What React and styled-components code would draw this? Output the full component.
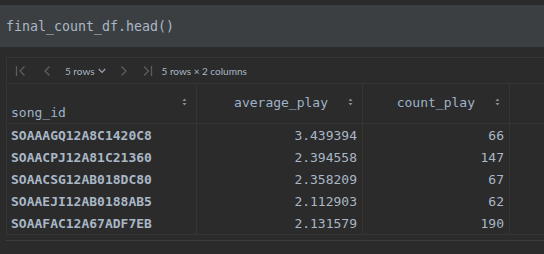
import React from "react";
import styled, { createGlobalStyle } from "styled-components";

const Global = createGlobalStyle`
  html, body { margin: 0; padding: 0; background: #2b2b2b; }
  body { width: 544px; height: 254px; overflow: hidden; }
`;

const Page = styled.div`
  padding-top: 5px;
  font-family: "DejaVu Sans Mono", "Liberation Mono", monospace;
`;

const CodeCell = styled.div`
  height: 42px;
  background: #3c3f41;
  padding-left: 6px;
  padding-top: 1px;
  box-sizing: border-box;
  display: flex;
  align-items: center;
  font-size: 13.3px;
  color: #a9b7c6;
`;

const Output = styled.div`
  margin-top: 10px;
  margin-left: 6px;
`;

const Toolbar = styled.div`
  height: 25px;
  border-top: 1px solid #353535;
  border-bottom: 1px solid #353535;
  border-left: 1px solid #353535;
  display: flex;
  align-items: center;
  font-family: Lato, "Noto Sans", sans-serif;
  font-size: 10px;
  color: #a9b7c6;
`;

const IconBtn = styled.span`
  display: inline-flex;
  align-items: center;
  margin-left: ${(p) => p.$ml}px;
  color: ${(p) => (p.$active ? "#a9b7c6" : "#5a5d61")};
`;

const Label = styled.span`
  margin-left: ${(p) => p.$ml}px;
  color: ${(p) => p.$color || "#a9b7c6"};
  white-space: nowrap;
`;

const Grid = styled.div`
  display: grid;
  grid-template-columns: 190px 166px 147px 1fr;
  border-left: 1px solid #353535;
  border-bottom: 1px solid #353535;
  margin-bottom: 5px;
`;

const HeadCell = styled.div`
  height: 39px;
  border-bottom: 1px solid #353535;
  border-right: ${(p) => (p.$last ? "none" : "1px solid #353535")};
  display: flex;
  align-items: center;
  justify-content: ${(p) => (p.$index ? "space-between" : "flex-end")};
  padding: 0 9px 0 4px;
  color: #9fb3c8;
  font-size: 13px;
`;

const IndexName = styled.span`
  align-self: flex-end;
  margin-bottom: 3px;
`;

const HeadName = styled.span`
  margin-right: 20px;
  margin-bottom: 3px;
`;

const SortIcon = styled.svg`
  width: 5px;
  height: 8px;
  margin-bottom: 3px;
  flex: none;
`;

const Cell = styled.div`
  height: 22px;
  border-right: ${(p) => (p.$last ? "none" : "1px solid #353535")};
  display: flex;
  align-items: center;
  justify-content: ${(p) => (p.$right ? "flex-end" : "flex-start")};
  padding: ${(p) => (p.$right ? "0 5px 0 0" : "0 0 0 4px")};
  font-size: 13px;
  font-weight: ${(p) => (p.$bold ? 700 : 400)};
  color: #a9b7c6;
`;

const Scroll = styled.div`
  border-top: 1px solid #3d3d3d;
  height: 14px;
`;

const Sort = () => (
  <SortIcon viewBox="0 0 5 8">
    <path d="M2.5 0.5 L4.5 3 L0.5 3 Z" fill="#8c8c8c" />
    <path d="M2.5 7.5 L4.5 5 L0.5 5 Z" fill="#8c8c8c" />
  </SortIcon>
);

const rows = [
  ["SOAAAGQ12A8C1420C8", "3.439394", "66"],
  ["SOAACPJ12A81C21360", "2.394558", "147"],
  ["SOAACSG12AB018DC80", "2.358209", "67"],
  ["SOAAEJI12AB0188AB5", "2.112903", "62"],
  ["SOAAFAC12A67ADF7EB", "2.131579", "190"],
];

const Stroke = ({ d, w }) => (
  <svg width={w} height="12" viewBox={`0 0 ${w} 12`}>
    <path d={d} fill="none" stroke="currentColor" strokeWidth="1.3" />
  </svg>
);

export default function App() {
  return (
    <>
      <Global />
      <Page>
        <CodeCell>final_count_df.head()</CodeCell>
        <Output>
          <Toolbar>
            <IconBtn $ml={8}>
              <Stroke w={11} d="M1.5 1 V11 M9.5 1.5 L5 6 L9.5 10.5" />
            </IconBtn>
            <IconBtn $ml={17}>
              <Stroke w={8} d="M6.5 1.5 L2 6 L6.5 10.5" />
            </IconBtn>
            <Label $ml={14}>5 rows</Label>
            <IconBtn $ml={3} $active>
              <svg width="8" height="6" viewBox="0 0 8 6">
                <path d="M0.8 1 L4 4.3 L7.2 1" fill="none" stroke="#9aa5b0" strokeWidth="1.2" />
              </svg>
            </IconBtn>
            <IconBtn $ml={14}>
              <Stroke w={8} d="M1.5 1.5 L6 6 L1.5 10.5" />
            </IconBtn>
            <IconBtn $ml={15}>
              <Stroke w={10} d="M1 1.5 L5.5 6 L1 10.5 M8.5 1 V11" />
            </IconBtn>
            <Label $ml={9}>5 rows × 2 columns</Label>
          </Toolbar>
          <Grid>
            <HeadCell $index>
              <IndexName>song_id</IndexName>
              <Sort />
            </HeadCell>
            <HeadCell>
              <HeadName>average_play</HeadName>
              <Sort />
            </HeadCell>
            <HeadCell>
              <HeadName>count_play</HeadName>
              <Sort />
            </HeadCell>
            <HeadCell $last />
            {rows.map((r) => (
              <React.Fragment key={r[0]}>
                <Cell $bold>{r[0]}</Cell>
                <Cell $right>{r[1]}</Cell>
                <Cell $right>{r[2]}</Cell>
                <Cell $last />
              </React.Fragment>
            ))}
          </Grid>
          <Scroll />
        </Output>
      </Page>
    </>
  );
}
